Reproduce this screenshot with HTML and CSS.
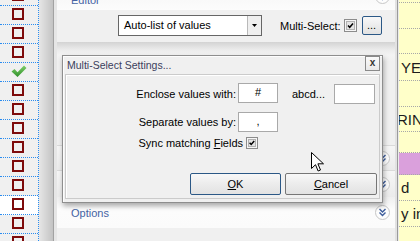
FILE: index.html
```html
<!DOCTYPE html>
<html lang="en">
<head>
  <meta charset="UTF-8">
  <title>Multi-Select Settings</title>
  <link rel="stylesheet" href="styles.css">
</head>
<body>
  <div class="app">
    <!-- left check column -->
    <div class="grid-left">
      <div class="cell"><span class="box"></span></div>
      <div class="cell"><span class="box"></span></div>
      <div class="cell"><span class="box"></span></div>
      <div class="cell"><span class="box"></span></div>
      <div class="cell">
        <svg class="tick" width="16" height="13" viewBox="0 0 16 13">
          <defs>
            <linearGradient id="g" x1="0" y1="0" x2="0" y2="1">
              <stop offset="0" stop-color="#7fcf6a"/>
              <stop offset="1" stop-color="#2f8f2a"/>
            </linearGradient>
          </defs>
          <polygon points="0.5,6.5 3.5,4 6.5,7.2 13,0.5 15.5,3 6.5,12" fill="url(#g)"/>
        </svg>
      </div>
      <div class="cell"><span class="box"></span></div>
      <div class="cell"><span class="box"></span></div>
      <div class="cell"><span class="box"></span></div>
      <div class="cell"><span class="box"></span></div>
      <div class="cell"><span class="box"></span></div>
      <div class="cell"><span class="box"></span></div>
      <div class="cell white"><span class="box"></span></div>
      <div class="cell"><span class="box"></span></div>
      <div class="cell"><span class="box"></span></div>
    </div>

    <div class="splitter"></div>

    <div class="main">
      <div class="sections">
        <div class="sec-head editor-head">
          <span class="sec-title">Editor</span>
          <svg class="toggle" width="15" height="15" viewBox="0 0 15 15"><circle cx="7.5" cy="7.5" r="7" fill="#fdfdfd" stroke="#c6c6c6"/><path d="M4.5 4l3 3 3-3M4.5 7.5l3 3 3-3" fill="none" stroke="#3d5d9b" stroke-width="1.4"/></svg>
        </div>
        <div class="editor-body">
          <div class="editor-row">
            <div class="combo">
              <span class="combo-text">Auto-list of values</span>
              <span class="combo-btn"><svg width="5" height="3" viewBox="0 0 5 3"><path d="M0 0h5L2.5 3z" fill="#000"/></svg></span>
            </div>
            <span class="ms-label">Multi-Select:</span>
            <svg class="chk" width="13" height="13" viewBox="0 0 13 13"><rect x="0.5" y="0.5" width="12" height="12" fill="#f6f6f6" stroke="#8c8c8c"/><rect x="2.5" y="2.5" width="8" height="8" fill="#e4e4e4" stroke="#b2b2b2"/><path d="M4 6.5l1.7 1.8L9 4.5" fill="none" stroke="#000" stroke-width="1.5"/></svg>
            <button class="btn default dots">...</button>
          </div>
        </div>
        <div class="sec-shade"></div>
        <div class="sec-head hidden-a">
          <svg class="toggle" width="15" height="15" viewBox="0 0 15 15"><circle cx="7.5" cy="7.5" r="7" fill="#fdfdfd" stroke="#c6c6c6"/><path d="M4.5 4l3 3 3-3M4.5 7.5l3 3 3-3" fill="none" stroke="#3d5d9b" stroke-width="1.4"/></svg>
        </div>
        <div class="sec-head hidden-b">
          <svg class="toggle" width="15" height="15" viewBox="0 0 15 15"><circle cx="7.5" cy="7.5" r="7" fill="#fdfdfd" stroke="#c6c6c6"/><path d="M4.5 4l3 3 3-3M4.5 7.5l3 3 3-3" fill="none" stroke="#3d5d9b" stroke-width="1.4"/></svg>
        </div>
        <div class="sec-head options-head">
          <span class="sec-title">Options</span>
          <svg class="toggle" width="15" height="15" viewBox="0 0 15 15"><circle cx="7.5" cy="7.5" r="7" fill="#fdfdfd" stroke="#c6c6c6"/><path d="M4.5 4l3 3 3-3M4.5 7.5l3 3 3-3" fill="none" stroke="#3d5d9b" stroke-width="1.4"/></svg>
        </div>
        <div class="sec-rest"></div>
      </div>
    </div>

    <div class="vsplit"></div>

    <!-- right data column -->
    <div class="grid-right">
      <div class="yrow first"></div>
      <div class="yrow"></div>
      <div class="yrow h25"></div>
      <div class="yrow h27">YE</div>
      <div class="yrow"></div>
      <div class="yrow h25 clip">RIN</div>
      <div class="yrow h21"></div>
      <div class="yrow h22 purple"></div>
      <div class="yrow">d</div>
      <div class="yrow">y in</div>
      <div class="yrow"></div>
    </div>

    <!-- dialog -->
    <div class="dialog">
      <div class="dlg-title">
        <span>Multi-Select Settings...</span>
        <span class="dlg-close">x</span>
      </div>
      <div class="dlg-body">
        <div class="form">
          <label class="lbl">Enclose values with:</label>
          <div class="field top">#</div>
          <span class="sample">abcd...</span>
          <div class="field bottom"></div>
          <label class="lbl">Separate values by:</label>
          <div class="field">,</div>
        </div>
        <div class="sync">
          <span>Sync matching <u>F</u>ields</span>
          <svg class="chk" width="12" height="12" viewBox="0 0 12 12"><rect x="0.5" y="0.5" width="11" height="11" fill="#f6f6f6" stroke="#8c8c8c"/><rect x="2.5" y="2.5" width="7" height="7" fill="#e4e4e4" stroke="#b2b2b2"/><path d="M3.6 5.8l1.6 1.7 3-3.4" fill="none" stroke="#000" stroke-width="1.5"/></svg>
        </div>
        <div class="dlg-buttons">
          <button class="btn default ok"><u>O</u>K</button>
          <button class="btn cancel"><u>C</u>ancel</button>
        </div>
      </div>
    </div>

    <svg class="cursor" width="13" height="21" viewBox="0 0 13 21"><path d="M0.5 0.5v16l4-3.8 2.6 6.3 2.4-1-2.6-6.2h5.6z" fill="#fff" stroke="#000"/></svg>
  </div>
</body>
</html>
```

FILE: styles.css
```css
* {
  box-sizing: border-box;
}
body {
  margin: 0;
  font-family: "Liberation Sans", Arial, sans-serif;
  font-size: 11px;
  color: #000;
  background: #f0f0f0;
}
.app {
  position: relative;
  display: flex;
  width: 420px;
  height: 241px;
  overflow: hidden;
}

/* left grid */
.grid-left {
  width: 39px;
  flex: none;
  background: #f0f0f0;
  border-right: 1px dotted #2a8cf0;
}
.cell {
  height: 19px;
  display: flex;
  align-items: center;
  padding: 0 0 2px 12px;
  border-bottom: 1px dotted #2a8cf0;
}
.cell:first-child {
  margin-top: -13px;
}
.cell.white {
  background: #fff;
}
.box {
  width: 12px;
  height: 12px;
  border: 2px solid #7e0b0b;
}
.tick {
  margin-left: -1px;
  margin-top: 1px;
}

.splitter {
  width: 14px;
  flex: none;
  background: linear-gradient(to right, #e6e6e6, #c3c3c3);
}

/* main panel */
.main {
  width: 342px;
  flex: none;
  border-left: 1px solid #a2a2a2;
  padding-left: 3px;
  background: #e6e6e6;
}
.sections {
  display: flex;
  flex-direction: column;
  height: 100%;
  background: #f0f0f0;
}
.sec-head {
  display: flex;
  align-items: center;
  justify-content: flex-end;
  padding: 0 5px 0 14px;
  flex: none;
}
.sec-title {
  flex: 1;
  color: #4563a3;
  font-size: 11px;
}
.toggle {
  flex: none;
}
.editor-head {
  height: 27px;
  margin-top: -17px;
  background: linear-gradient(#f4f4f4, #fcfcfc);
}
.editor-head .sec-title {
  padding-top: 7px;
}
.editor-body {
  height: 32px;
  padding: 5px 0 0 61px;
}
.editor-row {
  display: flex;
  align-items: center;
  height: 21px;
}
.combo {
  display: flex;
  width: 144px;
  height: 21px;
  border: 1px solid #666;
  background: #fff;
}
.combo-text {
  flex: 1;
  padding-left: 5px;
  line-height: 19px;
  white-space: nowrap;
}
.combo-btn {
  width: 14px;
  display: flex;
  align-items: center;
  justify-content: center;
  border-left: 1px solid #b9b9b9;
  background: #efefef;
}
.ms-label {
  margin-left: 18px;
}
.editor-row .chk {
  margin-left: 3px;
}
.btn {
  font: inherit;
  color: #000;
  padding: 0;
  border: 1px solid #767676;
  border-radius: 2px;
  background: linear-gradient(#f8f8f8, #ececec 50%, #e2e2e2);
}
.btn.default {
  border-color: #2b5886;
}
.dots {
  width: 20px;
  height: 19px;
  margin-left: 5px;
  line-height: 15px;
}

.sec-shade {
  height: 103px;
  flex: none;
  background: linear-gradient(#d3d3d3, #e3e3e3 5px, #ececec 8px, #f3f3f3 13px, #f0f0f0 20px);
}
.hidden-a {
  height: 25px;
  background: linear-gradient(#f6f6f6, #ebebeb);
  border-top: 1px solid #dadada;
}
.hidden-b {
  height: 27px;
  background: linear-gradient(#f6f6f6, #ebebeb);
  border-top: 1px solid #dadada;
}
.options-head {
  height: 31px;
  background: linear-gradient(#efefef, #fcfcfc 40%, #fbfbfb);
}
.sec-rest {
  flex: 1;
}

.vsplit {
  width: 3px;
  flex: none;
  background: #e2e2e2;
  border-right: 1px solid #9a9a9a;
}

/* right grid */
.grid-right {
  flex: 1;
  background: #ffffc9;
  border-left: 1px solid #ebebeb;
  font-size: 15px;
  color: #1c1c1c;
}
.yrow {
  height: 26px;
  display: flex;
  align-items: center;
  padding-left: 2px;
  white-space: nowrap;
  overflow: hidden;
  border-bottom: 1px dotted #a8a8a8;
}
.yrow.first {
  margin-top: -23px;
}
.yrow.h21 { height: 21px; }
.yrow.h22 { height: 22px; }
.yrow.h25 { height: 25px; }
.yrow.h27 { height: 27px; }
.yrow.clip {
  padding-left: 0;
  text-indent: -2px;
}
.yrow.purple {
  background: #daa0dc;
}

/* dialog */
.dialog {
  position: absolute;
  left: 62px;
  top: 55px;
  width: 321px;
  height: 148px;
  display: flex;
  flex-direction: column;
  padding: 0 2px 3px 2px;
  background: #f0f0f0;
  border: 1px solid #8e8e8e;
  box-shadow: inset 1px 1px #fdfdfd, 1px 3px 5px rgba(0, 0, 0, 0.3);
}
.dlg-title {
  height: 18px;
  display: flex;
  align-items: center;
  justify-content: space-between;
  padding-left: 2px;
  color: #3b405c;
  font-size: 10.5px;
}
.dlg-close {
  align-self: flex-start;
  width: 15px;
  height: 15px;
  border: 1px solid #8a8a8a;
  background: linear-gradient(#fbfbfb, #e8e8e8);
  font-size: 10px;
  font-weight: bold;
  line-height: 11px;
  text-align: center;
  color: #333;
}
.dlg-body {
  flex: 1;
  display: flex;
  flex-direction: column;
  padding: 8px 2px 3px 0;
  border: 1px solid #cbcbcb;
  box-shadow: inset 1px 1px #fff;
}
.form {
  display: grid;
  grid-template-columns: 172px 40px 56px 41px;
  grid-template-rows: 21px 20px;
  row-gap: 8px;
  align-items: center;
}
.lbl {
  text-align: right;
  padding-right: 2px;
  white-space: nowrap;
}
.sample {
  padding-left: 14px;
}
.field {
  height: 20px;
  border: 1px solid #a9a9a9;
  background: #fff;
  text-align: center;
  line-height: 17px;
}
.field.top {
  align-self: start;
}
.field.bottom {
  align-self: end;
}
.sync {
  display: flex;
  justify-content: flex-end;
  align-items: center;
  gap: 3px;
  width: 192px;
  height: 12px;
  margin-top: 5px;
}
.dlg-buttons {
  margin-top: auto;
  display: flex;
  justify-content: flex-end;
  gap: 4px;
}
.dlg-buttons .btn {
  height: 22px;
}
.ok {
  width: 91px;
}
.cancel {
  width: 92px;
}

.cursor {
  position: absolute;
  left: 311px;
  top: 152px;
}
```
